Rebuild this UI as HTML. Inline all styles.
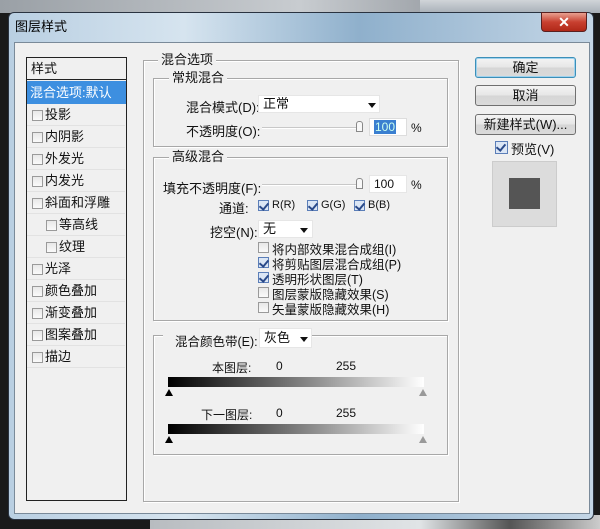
<!DOCTYPE html>
<html><head><meta charset="utf-8"><style>
*{margin:0;padding:0;box-sizing:border-box}
body{width:600px;height:529px;overflow:hidden;position:relative;background:#1a1a1a;font-family:"Liberation Sans","Noto Sans CJK SC",sans-serif;font-size:12px;color:#111}
.a{position:absolute}
.grp{position:absolute;border:1px solid #a8a8a8;box-shadow:inset 1px 1px 0 #fff,1px 1px 0 #fff}
.lg{position:absolute;background:#f0f0f0;padding:0 3px;font-size:13px;line-height:14px}
.cb{position:absolute;width:11px;height:11px;border:1px solid #9a9a9a;background:linear-gradient(#e8e8e8,#fafafa)}
.ck::after{content:"";position:absolute;left:2px;top:0px;width:4px;height:7px;border:solid #2a4a8a;border-width:0 2px 2px 0;transform:rotate(40deg)}
.ck{background:#dbe6f5;border-color:#5b7eb8}
.btn{position:absolute;left:475px;width:101px;height:21px;border:1px solid #707070;border-radius:3px;background:linear-gradient(#f4f4f4 0%,#e6e6e6 50%,#d6d6d6 51%,#dadada 100%);text-align:center;line-height:19px;font-size:13px}
.row{position:absolute;left:27px;width:98px;height:22px;line-height:22px;font-size:13px;border-bottom:1px solid #e2e2e2}
.sl{position:absolute;height:2px;background:#c8c8c8;border-bottom:1px solid #fff}
.inp{position:absolute;background:#fff;border:1px solid #e6e6e6;height:18px;line-height:16px;padding-left:4px}
.tri{position:absolute;width:0;height:0;border-left:4px solid transparent;border-right:4px solid transparent;border-top:5px solid #111}
</style></head><body>
<div class="a" style="left:0;top:0;width:600px;height:13px;background:linear-gradient(90deg,#9aa0a6,#c8ccd0 50%,#6a7078)"></div>
<div class="a" style="left:420px;top:0;width:180px;height:13px;background:linear-gradient(#d0d4d8,#a8b0b8)"></div>
<div class="a" style="left:150px;top:515px;width:450px;height:14px;background:linear-gradient(90deg,#b8bcc0,#e0e4e6 60%,#555 80%,#ccc)"></div>
<!-- window -->
<div class="a" style="left:8px;top:12px;width:586px;height:508px;border:1px solid #2a3340;border-radius:6px;background:linear-gradient(90deg,#b9cfe2,#d6e4ef 30%,#8fb0cc 60%,#c4d6e6);"></div>
<div class="a" style="left:14px;top:42px;width:576px;height:472px;background:#f0f0f0;border:1px solid #7a8a99"></div>
<div class="a" style="left:15px;top:16px;font-size:13px;color:#000">图层样式</div>
<div class="a" style="left:541px;top:12px;width:46px;height:20px;border:1px solid #5a2020;border-radius:0 0 4px 4px;background:linear-gradient(#e8a090,#c84030 50%,#b02818);color:#fff;text-align:center;font-weight:bold;font-size:14px;line-height:18px">✕</div>
<!-- left list -->
<div class="a" style="left:26px;top:57px;width:101px;height:444px;border:1px solid #222;background:#f0f0f0"></div>
<div class="a" style="left:27px;top:58px;width:99px;height:22px;border-bottom:1px solid #222;line-height:22px;padding-left:4px;font-size:13px">样式</div>
<div class="a" style="left:27px;top:81px;width:99px;height:23px;background:#3d8fe0;color:#fff;line-height:23px;padding-left:3px;font-size:13px">混合选项:默认</div>
<div class="row" style="top:104px"><span class="cb" style="left:5px;top:6px"></span><span style="position:absolute;left:18px">投影</span></div>
<div class="row" style="top:126px"><span class="cb" style="left:5px;top:6px"></span><span style="position:absolute;left:18px">内阴影</span></div>
<div class="row" style="top:148px"><span class="cb" style="left:5px;top:6px"></span><span style="position:absolute;left:18px">外发光</span></div>
<div class="row" style="top:170px"><span class="cb" style="left:5px;top:6px"></span><span style="position:absolute;left:18px">内发光</span></div>
<div class="row" style="top:192px"><span class="cb" style="left:5px;top:6px"></span><span style="position:absolute;left:18px">斜面和浮雕</span></div>
<div class="row" style="top:214px"><span class="cb" style="left:19px;top:6px"></span><span style="position:absolute;left:32px">等高线</span></div>
<div class="row" style="top:236px"><span class="cb" style="left:19px;top:6px"></span><span style="position:absolute;left:32px">纹理</span></div>
<div class="row" style="top:258px"><span class="cb" style="left:5px;top:6px"></span><span style="position:absolute;left:18px">光泽</span></div>
<div class="row" style="top:280px"><span class="cb" style="left:5px;top:6px"></span><span style="position:absolute;left:18px">颜色叠加</span></div>
<div class="row" style="top:302px"><span class="cb" style="left:5px;top:6px"></span><span style="position:absolute;left:18px">渐变叠加</span></div>
<div class="row" style="top:324px"><span class="cb" style="left:5px;top:6px"></span><span style="position:absolute;left:18px">图案叠加</span></div>
<div class="row" style="top:346px"><span class="cb" style="left:5px;top:6px"></span><span style="position:absolute;left:18px">描边</span></div>
<!-- main group -->
<div class="grp" style="left:143px;top:60px;width:316px;height:442px"></div>
<div class="lg" style="left:158px;top:53px">混合选项</div>
<div class="grp" style="left:153px;top:78px;width:295px;height:69px"></div>
<div class="lg" style="left:169px;top:71px">常规混合</div>
<div class="a" style="left:186px;top:97px;font-size:13px">混合模式(D):</div>
<div class="inp" style="left:258px;top:95px;width:122px;font-size:13px">正常</div>
<div class="tri" style="left:368px;top:103px"></div>
<div class="a" style="left:186px;top:121px;font-size:13px">不透明度(O):</div>
<div class="sl" style="left:262px;top:127px;width:100px"></div>
<div class="a" style="left:356px;top:121px;width:7px;height:11px;border:1px solid #888;border-radius:3px 3px 0 0;background:#f8f8f8"></div>
<div class="inp" style="left:369px;top:118px;width:38px;border-color:#ddd"><span style="background:#3a7fd0;color:#cfe;padding:0 1px">100</span></div>
<div class="a" style="left:411px;top:121px;font-size:12px">%</div>
<div class="grp" style="left:153px;top:157px;width:295px;height:164px"></div>
<div class="lg" style="left:169px;top:150px">高级混合</div>
<div class="a" style="left:163px;top:178px;font-size:13px">填充不透明度(F):</div>
<div class="sl" style="left:262px;top:184px;width:100px"></div>
<div class="a" style="left:356px;top:178px;width:7px;height:11px;border:1px solid #888;border-radius:3px 3px 0 0;background:#f8f8f8"></div>
<div class="inp" style="left:369px;top:175px;width:38px">100</div>
<div class="a" style="left:411px;top:178px">%</div>
<div class="a" style="left:219px;top:198px;font-size:13px">通道:</div>
<div class="cb ck" style="left:258px;top:200px"></div><div class="a" style="left:272px;top:199px;font-size:11px">R(R)</div>
<div class="cb ck" style="left:307px;top:200px"></div><div class="a" style="left:321px;top:199px;font-size:11px">G(G)</div>
<div class="cb ck" style="left:354px;top:200px"></div><div class="a" style="left:368px;top:199px;font-size:11px">B(B)</div>
<div class="a" style="left:210px;top:222px;font-size:13px">挖空(N):</div>
<div class="inp" style="left:258px;top:220px;width:55px;font-size:13px">无</div>
<div class="tri" style="left:300px;top:228px"></div>
<div class="cb" style="left:258px;top:242px"></div><div class="a" style="left:272px;top:239px;font-size:12.5px">将内部效果混合成组(I)</div>
<div class="cb ck" style="left:258px;top:257px"></div><div class="a" style="left:272px;top:254px;font-size:12.5px">将剪贴图层混合成组(P)</div>
<div class="cb ck" style="left:258px;top:272px"></div><div class="a" style="left:272px;top:269px;font-size:12.5px">透明形状图层(T)</div>
<div class="cb" style="left:258px;top:287px"></div><div class="a" style="left:272px;top:284px;font-size:12.5px">图层蒙版隐藏效果(S)</div>
<div class="cb" style="left:258px;top:302px"></div><div class="a" style="left:272px;top:299px;font-size:12.5px">矢量蒙版隐藏效果(H)</div>
<div class="grp" style="left:153px;top:335px;width:295px;height:120px"></div>
<div class="a" style="left:163px;top:330px;width:96px;height:14px;background:#f0f0f0"></div>
<div class="a" style="left:175px;top:331px;font-size:12.5px">混合颜色带(E):</div>
<div class="inp" style="left:259px;top:328px;width:53px;font-size:13px;height:20px;line-height:18px">灰色</div>
<div class="tri" style="left:300px;top:337px"></div>
<div class="a" style="left:212px;top:359px">本图层:</div>
<div class="a" style="left:276px;top:359px">0</div>
<div class="a" style="left:336px;top:359px">255</div>
<div class="a" style="left:168px;top:377px;width:256px;height:10px;background:linear-gradient(90deg,#000,#888 55%,#fff)"></div>
<div class="a" style="left:165px;top:389px;width:0;height:0;border-left:4px solid transparent;border-right:4px solid transparent;border-bottom:7px solid #000"></div>
<div class="a" style="left:419px;top:389px;width:0;height:0;border-left:4px solid transparent;border-right:4px solid transparent;border-bottom:7px solid #999"></div>
<div class="a" style="left:201px;top:406px">下一图层:</div>
<div class="a" style="left:276px;top:406px">0</div>
<div class="a" style="left:336px;top:406px">255</div>
<div class="a" style="left:168px;top:424px;width:256px;height:10px;background:linear-gradient(90deg,#000,#888 55%,#fff)"></div>
<div class="a" style="left:165px;top:436px;width:0;height:0;border-left:4px solid transparent;border-right:4px solid transparent;border-bottom:7px solid #000"></div>
<div class="a" style="left:419px;top:436px;width:0;height:0;border-left:4px solid transparent;border-right:4px solid transparent;border-bottom:7px solid #999"></div>
<!-- buttons -->
<div class="btn" style="top:57px;border-color:#3c8fb8;box-shadow:0 0 0 1px #9ed2ee inset">确定</div>
<div class="btn" style="top:85px">取消</div>
<div class="btn" style="top:114px">新建样式(W)...</div>
<div class="cb ck" style="left:495px;top:141px;width:13px;height:13px"></div>
<div class="a" style="left:511px;top:139px;font-size:13px">预览(V)</div>
<div class="a" style="left:492px;top:161px;width:65px;height:66px;background:#dcdcdc;border:1px solid #ccc"></div>
<div class="a" style="left:509px;top:178px;width:31px;height:31px;background:#555"></div>
</body></html>
